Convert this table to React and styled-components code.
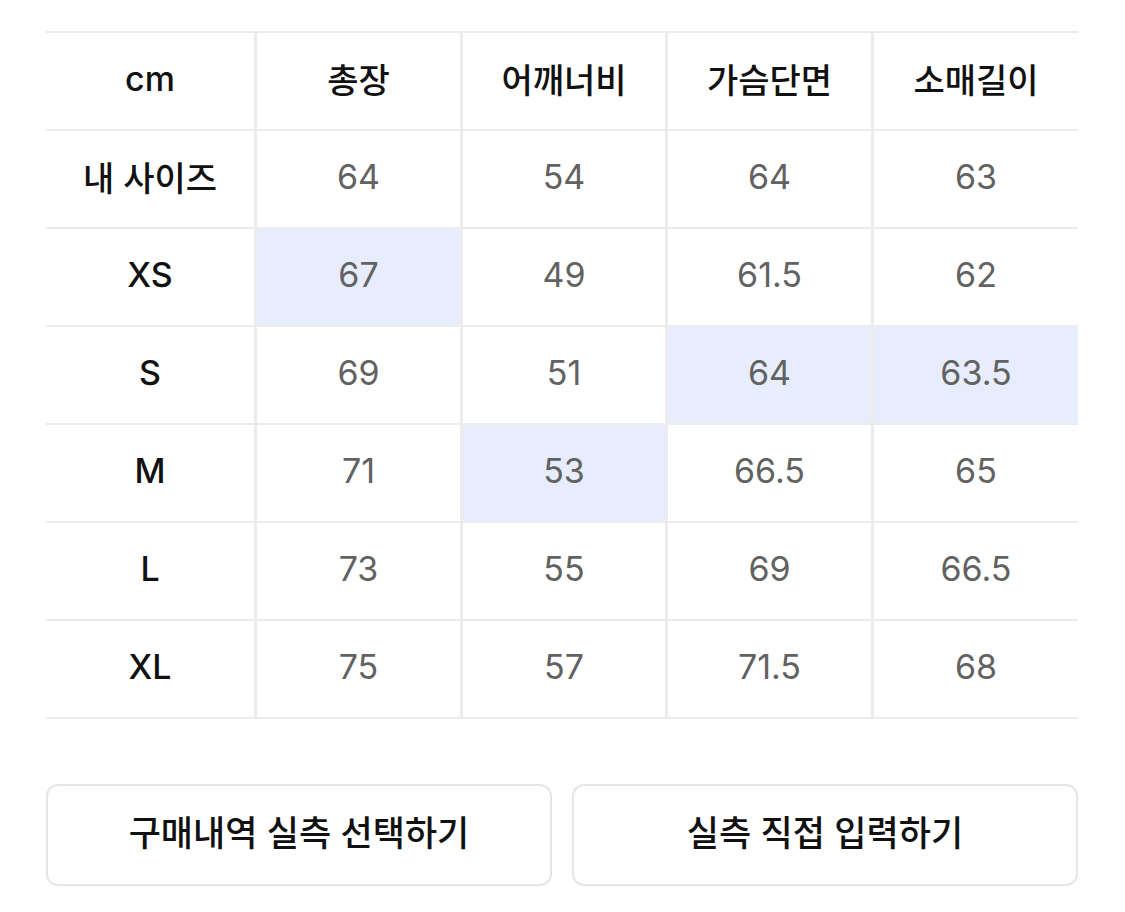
import React from "react";
import styled, { createGlobalStyle } from "styled-components";

const GlobalStyle = createGlobalStyle`
  body {
    margin: 0;
    background: #fff;
    font-family: "Inter", "Noto Sans CJK KR", sans-serif;
  }
`;

const Page = styled.div`
  padding: 31px 47px 0 46px;
  width: 1032px;
`;

const Table = styled.div`
  display: grid;
  grid-template-columns: 211px 206px 205px 206px 1fr;
  border-top: 2px solid #ececec;
`;

const Cell = styled.div`
  height: 98px;
  box-sizing: border-box;
  padding-bottom: 6px;
  display: flex;
  align-items: center;
  justify-content: center;
  border-bottom: 2px solid #ececec;
  border-right: ${(p) => (p.last ? "none" : "3px solid #ececec")};
  background: ${(p) => (p.hl ? "#e7edfc" : "#fff")};
  font-size: 34px;
  font-weight: ${(p) => (p.head ? 500 : 400)};
  color: ${(p) => (p.head ? "#111" : "#626262")};
`;

const Buttons = styled.div`
  display: grid;
  grid-template-columns: 1fr 1fr;
  gap: 20px;
  margin-top: 65px;
`;

const Button = styled.button`
  height: 102px;
  padding: 0 0 9px;
  border: 2px solid #e6e6e6;
  border-radius: 12px;
  background: #fff;
  font-family: "Inter", "Noto Sans CJK KR", sans-serif;
  font-size: 35px;
  font-weight: 500;
  color: #111;
  cursor: pointer;
`;

const headers = ["cm", "총장", "어깨너비", "가슴단면", "소매길이"];

const rows = [
  { label: "내 사이즈", values: ["64", "54", "64", "63"], hl: [] },
  { label: "XS", values: ["67", "49", "61.5", "62"], hl: [0] },
  { label: "S", values: ["69", "51", "64", "63.5"], hl: [2, 3] },
  { label: "M", values: ["71", "53", "66.5", "65"], hl: [1] },
  { label: "L", values: ["73", "55", "69", "66.5"], hl: [] },
  { label: "XL", values: ["75", "57", "71.5", "68"], hl: [] },
];

export default function App() {
  return (
    <Page>
      <GlobalStyle />
      <Table>
        {headers.map((h, i) => (
          <Cell key={h} head last={i === headers.length - 1}>
            {h}
          </Cell>
        ))}
        {rows.map((row) => (
          <React.Fragment key={row.label}>
            <Cell head>{row.label}</Cell>
            {row.values.map((v, i) => (
              <Cell key={i} hl={row.hl.includes(i)} last={i === 3}>
                {v}
              </Cell>
            ))}
          </React.Fragment>
        ))}
      </Table>
      <Buttons>
        <Button>구매내역 실측 선택하기</Button>
        <Button>실측 직접 입력하기</Button>
      </Buttons>
    </Page>
  );
}
